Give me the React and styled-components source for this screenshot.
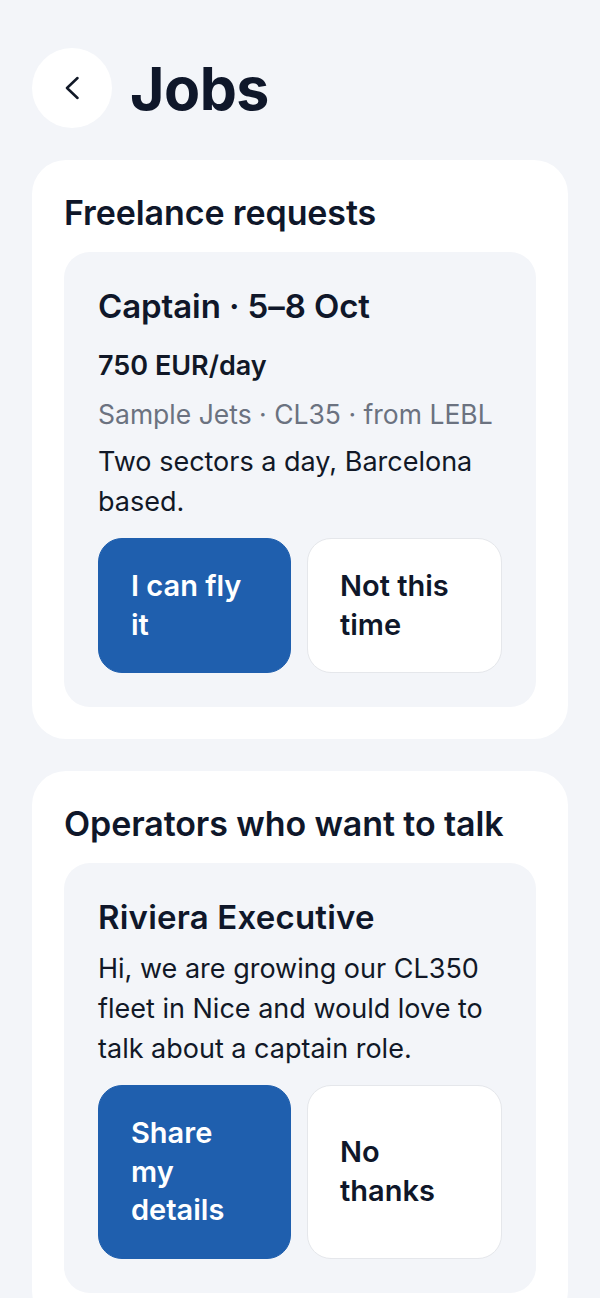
import React from 'react';
import styled, { createGlobalStyle } from 'styled-components';

const GlobalStyle = createGlobalStyle`
    * { box-sizing: border-box; }
    body {
        margin: 0;
        background: #f3f5f9;
        font-family: Inter, "Noto Sans", sans-serif;
        color: #111827;
    }
`

const requests = [
    {
        id: 1,
        title: 'Captain · 5–8 Oct',
        rate: '750 EUR/day',
        meta: 'Sample Jets · CL35 · from LEBL',
        note: 'Two sectors a day, Barcelona based.',
    },
]

const operators = [
    {
        id: 1,
        name: 'Riviera Executive',
        message: 'Hi, we are growing our CL350 fleet in Nice and would love to talk about a captain role.',
    },
]

function App() {
    return (
        <Page>
            <GlobalStyle />
            <Header>
                <BackButton aria-label="Back">
                    <svg width="14" height="24" viewBox="0 0 14 24" fill="none">
                        <polyline points="12.5,2 2,12 12.5,22" stroke="#111827" strokeWidth="2.5" strokeLinecap="round" strokeLinejoin="round" />
                    </svg>
                </BackButton>
                <Title>Jobs</Title>
            </Header>

            <Section>
                <SectionTitle>Freelance requests</SectionTitle>
                {requests.map(r => (
                    <Item key={r.id}>
                        <ItemTitle>{r.title}</ItemTitle>
                        <Details>
                            <Rate>{r.rate}</Rate>
                            <Meta>{r.meta}</Meta>
                            <Body>{r.note}</Body>
                        </Details>
                        <Actions>
                            <Button primary>I can fly it</Button>
                            <Button>Not this time</Button>
                        </Actions>
                    </Item>
                ))}
            </Section>

            <Section>
                <SectionTitle>Operators who want to talk</SectionTitle>
                {operators.map(o => (
                    <Item key={o.id}>
                        <ItemTitle tight>{o.name}</ItemTitle>
                        <Body>{o.message}</Body>
                        <Actions>
                            <Button primary>Share my details</Button>
                            <Button>No thanks</Button>
                        </Actions>
                    </Item>
                ))}
            </Section>
        </Page>
    )
}

export default App

const Page = styled.div`
    padding: 48px 32px 32px;
    display: flex;
    flex-direction: column;
    gap: 32px;
`

const Header = styled.div`
    display: flex;
    align-items: center;
    gap: 18px;
`

const BackButton = styled.button`
    width: 80px;
    height: 80px;
    border-radius: 50%;
    border: none;
    background: #ffffff;
    display: flex;
    align-items: center;
    justify-content: center;
    padding: 0;
    cursor: pointer;
`

const Title = styled.h1`
    margin: 0;
    font-size: 59px;
    font-weight: 700;
    letter-spacing: -0.5px;
    line-height: 1;
    color: #0f172a;
`

const Section = styled.section`
    background: #ffffff;
    border-radius: 34px;
    padding: 32px;
`

const SectionTitle = styled.h2`
    margin: 0 0 18px;
    font-size: 34px;
    font-weight: 600;
    line-height: 42px;
    letter-spacing: -0.1px;
    color: #0f172a;
`

const Item = styled.div`
    background: #f3f5f9;
    border-radius: 26px;
    padding: 34px;
`

const ItemTitle = styled.h3`
    margin: 0 0 ${props => (props.tight ? '12px' : '20px')};
    font-size: 33px;
    font-weight: 600;
    line-height: 40px;
    letter-spacing: ${props => (props.tight ? '0.2px' : '-0.1px')};
    color: #0f172a;
`

const Details = styled.div`
    display: flex;
    flex-direction: column;
    gap: 8px;
`

const Rate = styled.div`
    font-size: 27px;
    font-weight: 600;
    line-height: 40px;
`

const Meta = styled.div`
    font-size: 26.5px;
    line-height: 40px;
    color: #6b7280;
`

const Body = styled.p`
    margin: 0;
    font-size: 27px;
    line-height: 40px;
`

const Actions = styled.div`
    display: flex;
    gap: 16px;
    margin-top: 16px;
`

const Button = styled.button`
    flex: ${props => (props.primary ? '192' : '195')};
    min-width: 0;
    text-align: left;
    font-family: inherit;
    font-size: 29px;
    font-weight: 600;
    line-height: 38.5px;
    padding: 28px 32px;
    border-radius: 24px;
    cursor: pointer;
    background: ${props => (props.primary ? '#1f5fae' : '#ffffff')};
    color: ${props => (props.primary ? '#ffffff' : '#0f172a')};
    border: 1px solid ${props => (props.primary ? '#1f5fae' : '#e5e7eb')};
`
